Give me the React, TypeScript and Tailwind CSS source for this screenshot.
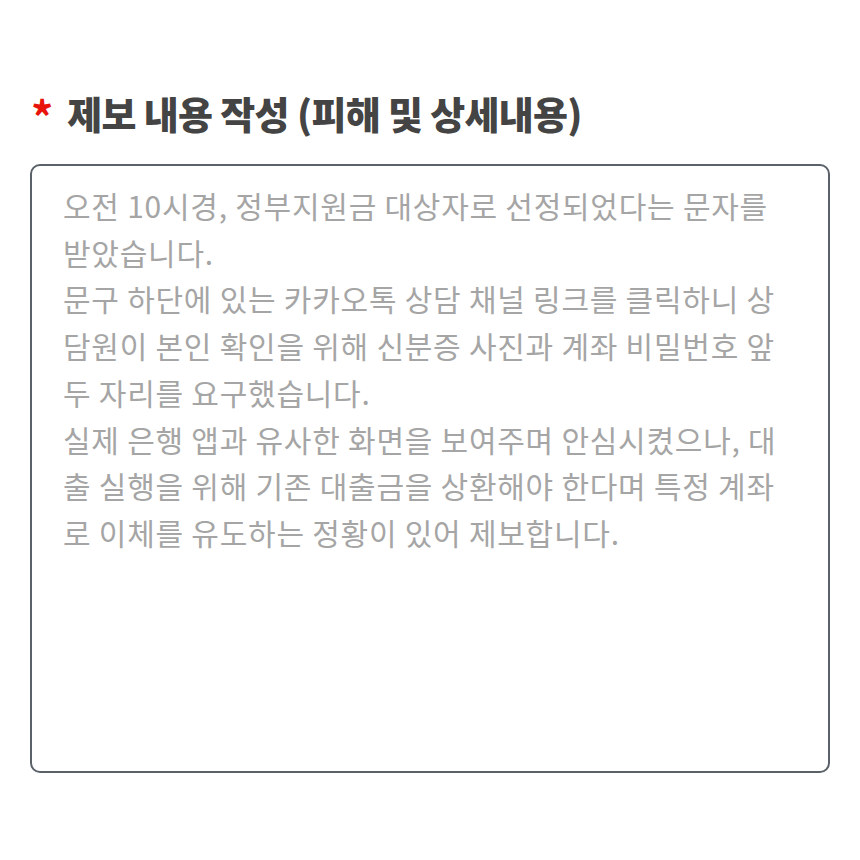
import React from "react";

const lines = [
  "오전 10시경, 정부지원금 대상자로 선정되었다는 문자를",
  "받았습니다.",
  "문구 하단에 있는 카카오톡 상담 채널 링크를 클릭하니 상",
  "담원이 본인 확인을 위해 신분증 사진과 계좌 비밀번호 앞",
  "두 자리를 요구했습니다.",
  "실제 은행 앱과 유사한 화면을 보여주며 안심시켰으나, 대",
  "출 실행을 위해 기존 대출금을 상환해야 한다며 특정 계좌",
  "로 이체를 유도하는 정황이 있어 제보합니다.",
];

export default function App() {
  return (
    <div
      className="w-[860px] h-[860px] bg-white px-[30px] pt-[88px]"
      style={{ fontFamily: '"Noto Sans CJK KR", "Noto Sans", sans-serif' }}
    >
      <div className="flex items-center h-[50px]">
        <span className="text-[#e8140c] text-[44px] font-bold leading-none mt-[4px] ml-[1px]">*</span>
        <span className="ml-[14px] text-[38px] font-extrabold text-[#444444] tracking-[-0.7px] leading-none">
          제보 내용 작성 (피해 및 상세내용)
        </span>
      </div>
      <div className="mt-[26px] h-[609px] w-[800px] rounded-[10px] border-2 border-[#5b6169] pl-[31px] pt-[16px]">
        {lines.map((l, i) => (
          <div
            key={i}
            className="whitespace-nowrap text-[30px] leading-[46.7px] text-[#a5a5a5] tracking-[0.75px]"
          >
            {l}
          </div>
        ))}
      </div>
    </div>
  );
}
